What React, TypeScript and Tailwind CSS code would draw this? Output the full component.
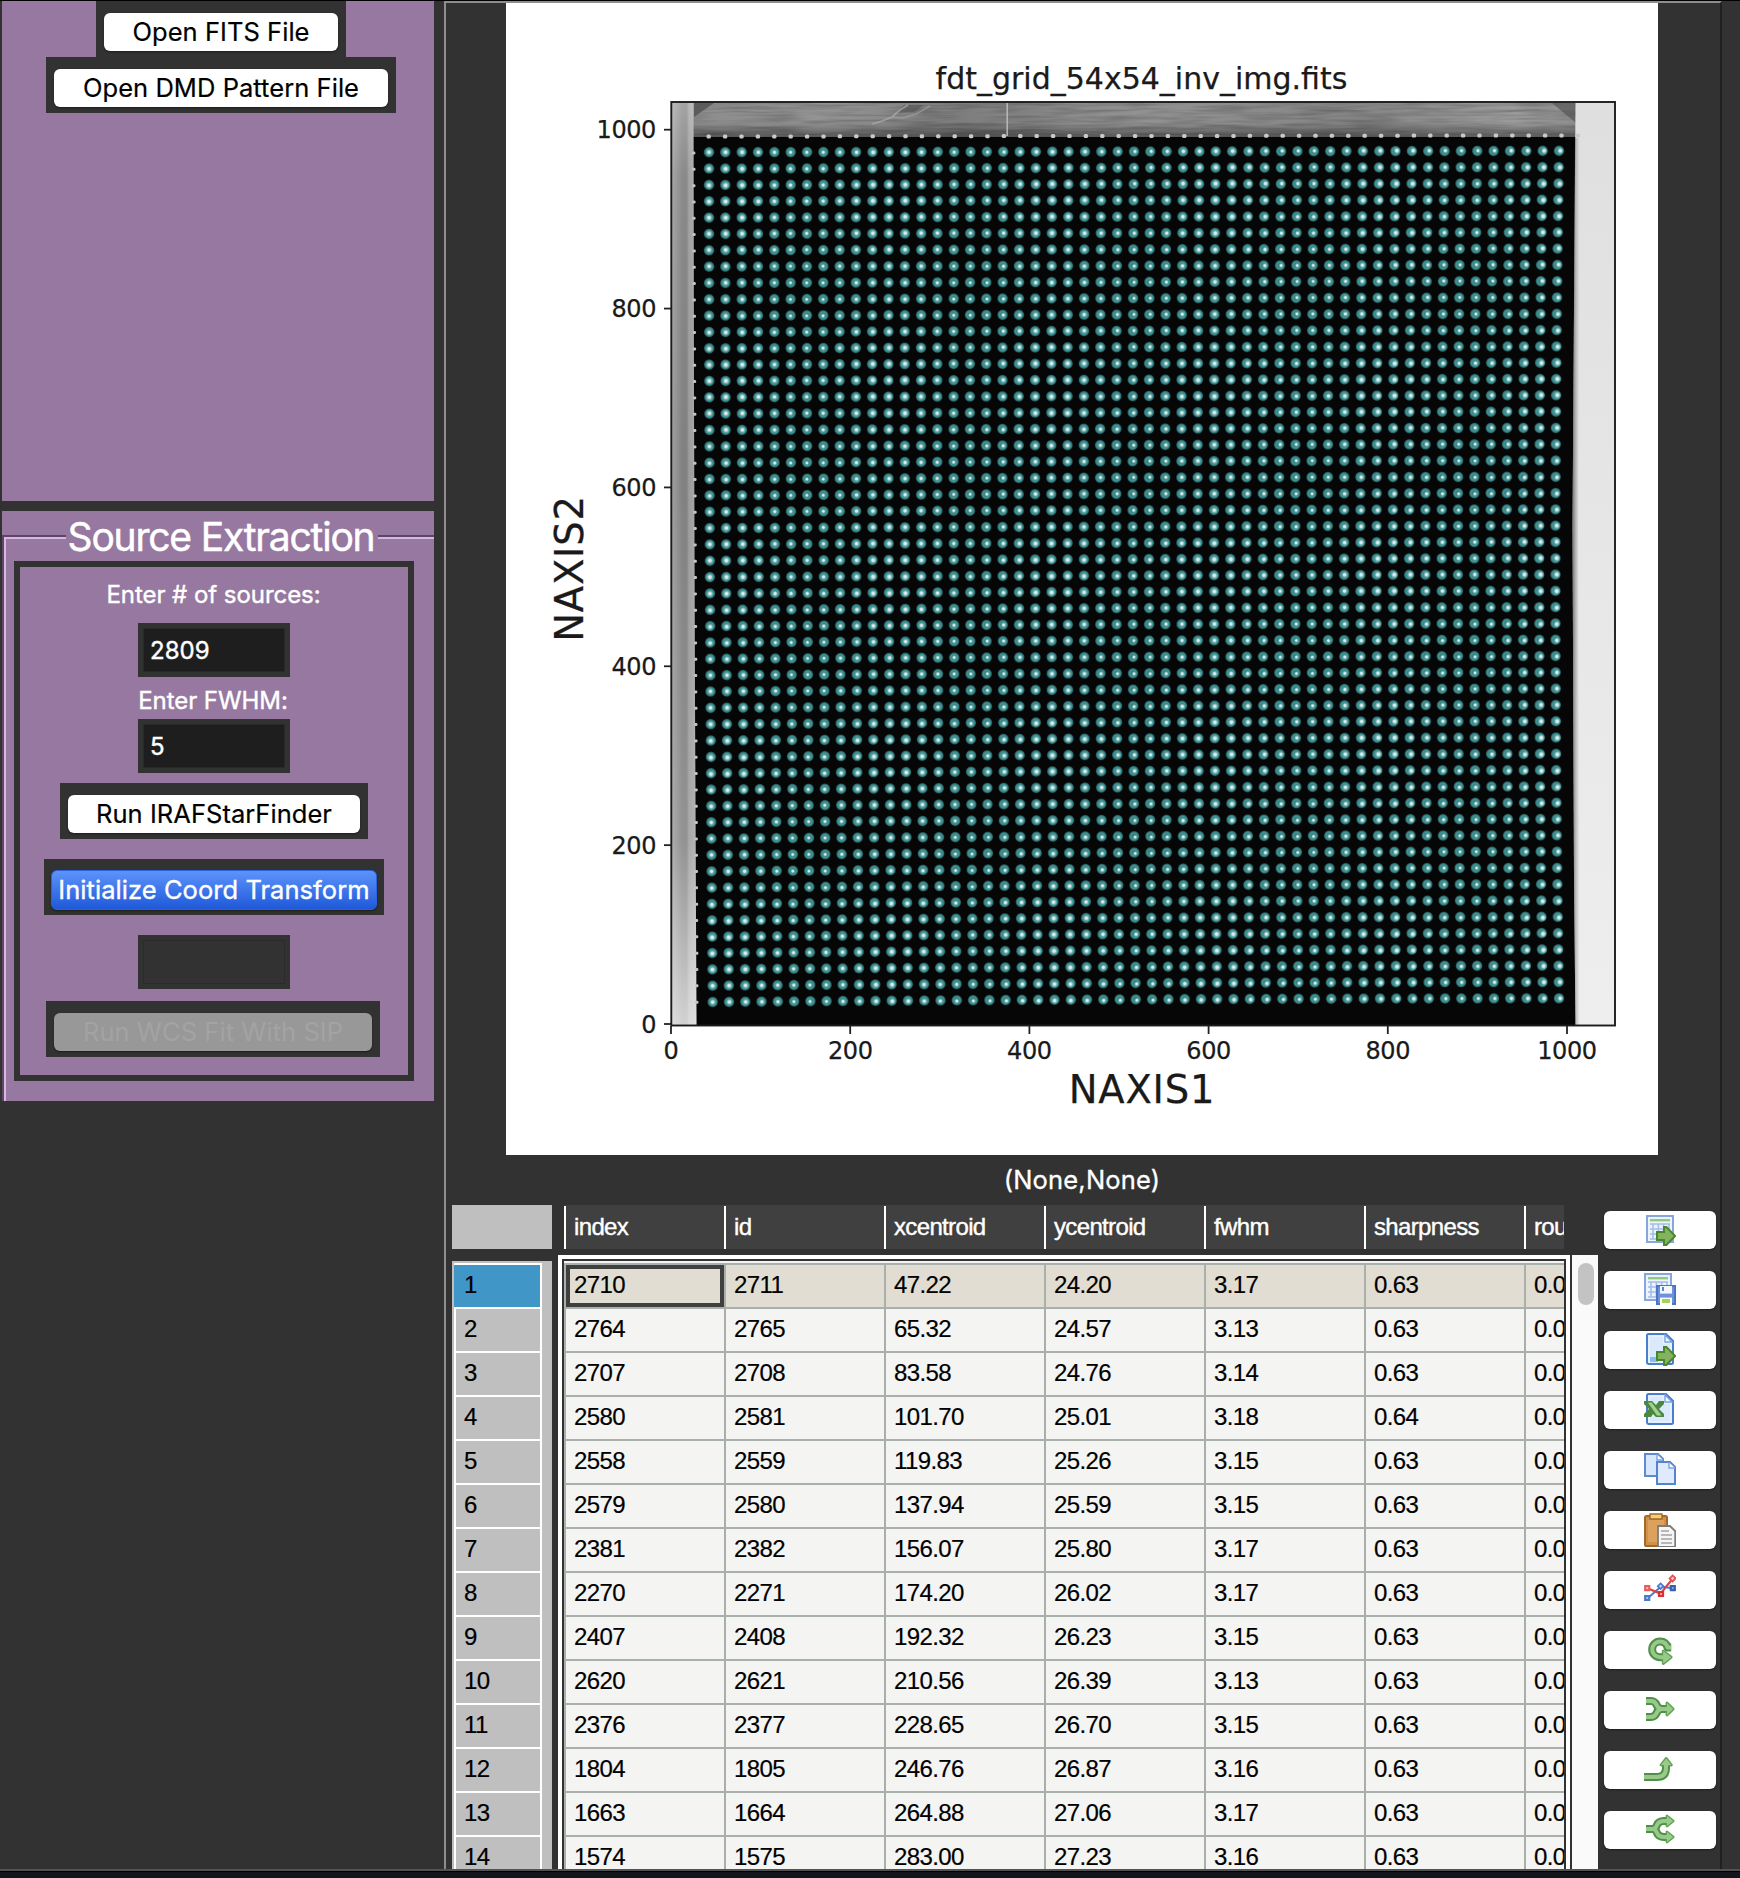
import React from "react";

const COLUMNS = ["index", "id", "xcentroid", "ycentroid", "fwhm", "sharpness", "rou"];

const ROWS: string[][] = [
  ["2710", "2711", "47.22", "24.20", "3.17", "0.63", "0.0"],
  ["2764", "2765", "65.32", "24.57", "3.13", "0.63", "0.0"],
  ["2707", "2708", "83.58", "24.76", "3.14", "0.63", "0.0"],
  ["2580", "2581", "101.70", "25.01", "3.18", "0.64", "0.0"],
  ["2558", "2559", "119.83", "25.26", "3.15", "0.63", "0.0"],
  ["2579", "2580", "137.94", "25.59", "3.15", "0.63", "0.0"],
  ["2381", "2382", "156.07", "25.80", "3.17", "0.63", "0.0"],
  ["2270", "2271", "174.20", "26.02", "3.17", "0.63", "0.0"],
  ["2407", "2408", "192.32", "26.23", "3.15", "0.63", "0.0"],
  ["2620", "2621", "210.56", "26.39", "3.13", "0.63", "0.0"],
  ["2376", "2377", "228.65", "26.70", "3.15", "0.63", "0.0"],
  ["1804", "1805", "246.76", "26.87", "3.16", "0.63", "0.0"],
  ["1663", "1664", "264.88", "27.06", "3.17", "0.63", "0.0"],
  ["1574", "1575", "283.00", "27.23", "3.16", "0.63", "0.0"],
];

/* ---------- left side controls ---------- */

type ButtonKind = "normal" | "primary" | "disabled";

function TkButton({ label, kind = "normal", className = "" }: { label: string; kind?: ButtonKind; className?: string }) {
  const face =
    kind === "primary"
      ? "mx-[7px] mt-[11px] mb-[5px] rounded-[6px] border border-[#2a63dc] bg-gradient-to-b from-[#5c93fb] to-[#1f58d8] text-white [-webkit-text-stroke:0.35px_white]"
      : kind === "disabled"
        ? "mx-2 mt-3 mb-1.5 rounded-[6px] bg-[#989898] text-[#a3a3a3]"
        : "mx-2 mt-3 mb-1.5 rounded-[6px] bg-white text-black [-webkit-text-stroke:0.2px_black]";
  return (
    <div className={`flex h-14 shrink-0 bg-[#323232] ${className}`}>
      <button
        className={`flex flex-1 items-center justify-center text-[25.5px] leading-none tracking-[0.05px] whitespace-nowrap shadow-[0_1px_2px_rgba(0,0,0,0.45)] ${face}`}
      >
        {label}
      </button>
    </div>
  );
}

function Entry({ value, disabled = false, className = "" }: { value: string; disabled?: boolean; className?: string }) {
  return (
    <div className={`h-[54px] w-[152px] shrink-0 bg-[#323232] p-[5px] ${className}`}>
      <div
        className={`flex h-full items-center border pt-[2px] pl-[6px] text-2xl leading-none text-white [-webkit-text-stroke:0.4px_white] ${
          disabled ? "border-[#2b2b2b] bg-[#323232]" : "border-[#292929] bg-[#1e1e1e]"
        }`}
      >
        {value}
      </div>
    </div>
  );
}

function Label({ children, className = "" }: { children: React.ReactNode; className?: string }) {
  return (
    <div
      className={`flex h-[34px] items-center text-2xl leading-none tracking-[-0.05px] text-white [-webkit-text-stroke:0.4px_white] ${className}`}
    >
      {children}
    </div>
  );
}

function Sidebar() {
  return (
    <aside className="flex w-[444px] shrink-0 flex-col pr-[10px] pl-[2px]">
      <section className="flex h-[500px] flex-col items-center bg-[#9678a0]">
        <TkButton label="Open FITS File" className="mr-[-6px] w-[250px]" />
        <TkButton label="Open DMD Pattern File" className="mr-[-6px] w-[350px]" />
      </section>
      <section className="relative mt-[10px] h-[590px] bg-[#9678a0] pt-6">
        <div className="h-full border-t-2 border-l-2 border-[#5c4863]">
          <div className="h-full border-t-2 border-l-2 border-[#d9b6e6] pt-[22px] pl-2">
            <div className="flex h-[520px] w-[400px] flex-col items-center border-[6px] border-[#323232]">
              <Label className="mt-[11px] mr-px">Enter # of sources:</Label>
              <Entry value="2809" className="mt-[11px]" />
              <Label className="mt-[6px] mr-[2px] pt-[2px]">Enter FWHM:</Label>
              <Entry value="5" className="mt-[2px]" />
              <TkButton label="Run IRAFStarFinder" className="mt-[10px] w-[308px]" />
              <TkButton label="Initialize Coord Transform" kind="primary" className="mt-5 w-[340px]" />
              <Entry value="" disabled className="mt-5" />
              <TkButton label="Run WCS Fit With SIP" kind="disabled" className="mt-3 mr-[2px] w-[334px]" />
            </div>
          </div>
        </div>
        <h2 className="absolute top-[1px] left-[64px] flex h-[48px] w-[312px] items-center justify-center bg-[#9678a0] pr-[2px] text-[39px] leading-none tracking-[-1.2px] whitespace-nowrap text-white [-webkit-text-stroke:0.5px_white]">
          Source Extraction
        </h2>
      </section>
    </aside>
  );
}

/* ---------- plot ---------- */

const N = 53;

/** Centre of the detected source in column i, row j (row 0 is the top one). */
function sourceAt(i: number, j: number): [number, number] {
  const u = i / (N - 1);
  const v = j / (N - 1);
  const left = 709 + 3.7 * v * v;
  const right = 1559 - 14 * v * (1 - v);
  const top = 152.2 - 1.4 * u;
  const bottom = 1002 - 3.7 * u - 3.2 * u * (1 - u);
  return [left + (right - left) * u, top + (bottom - top) * v];
}

const X_TICKS = [0, 200, 400, 600, 800, 1000];
const Y_TICKS = [0, 200, 400, 600, 800, 1000];
const xPos = (v: number) => 671 + v * 0.896;
const yPos = (v: number) => 1024 - v * 0.8943;

function FitsPlot() {
  const rings: React.ReactNode[] = [];
  const stars: React.ReactNode[] = [];
  for (let j = 0; j < N; j++) {
    for (let i = 0; i < N; i++) {
      const [x, y] = sourceAt(i, j);
      const key = j * N + i;
      const dx = 1.1 * (i / N) + 0.4 * Math.sin(i * 0.78);
      const dy = 0.5 * (j / N) + 0.4 * Math.sin(j * 0.7 + i * 0.12);
      const r = 3.2 + 0.45 * Math.sin(i * 0.62 + 1) + 0.3 * Math.sin(j * 0.55);
      rings.push(<circle key={key} cx={x.toFixed(1)} cy={y.toFixed(1)} r="6" fill="url(#ring)" />);
      stars.push(
        <circle key={key} cx={(x + dx).toFixed(1)} cy={(y + dy).toFixed(1)} r={r.toFixed(1)} fill="url(#star)" />,
      );
    }
  }
  return (
    <svg width="1152" height="1152" viewBox="506 3 1152 1152" className="block bg-white" fontFamily='"DejaVu Sans", sans-serif'>
      <defs>
        <radialGradient id="ring">
          <stop offset="0" stopColor="#265c5d" />
          <stop offset="0.3" stopColor="#357f80" />
          <stop offset="0.56" stopColor="#439696" />
          <stop offset="0.78" stopColor="#2d6f70" stopOpacity="0.9" />
          <stop offset="1" stopColor="#0b2020" stopOpacity="0" />
        </radialGradient>
        <radialGradient id="star">
          <stop offset="0" stopColor="#e8f3f2" />
          <stop offset="0.35" stopColor="#cfe6e4" />
          <stop offset="1" stopColor="#6dbbbb" stopOpacity="0" />
        </radialGradient>
        <linearGradient id="leftBand" x1="0" x2="0" y1="0" y2="1">
          <stop offset="0" stopColor="#a0a0a0" />
          <stop offset="0.08" stopColor="#848484" />
          <stop offset="0.4" stopColor="#7a7a7a" />
          <stop offset="0.8" stopColor="#8d8d8d" />
          <stop offset="1" stopColor="#d0d0d0" />
        </linearGradient>
        <linearGradient id="leftSheen" x1="0" x2="1" y1="0" y2="0">
          <stop offset="0" stopColor="#fff" stopOpacity="0.3" />
          <stop offset="0.45" stopColor="#fff" stopOpacity="0.05" />
          <stop offset="0.62" stopColor="#fff" stopOpacity="0.05" />
          <stop offset="0.7" stopColor="#fff" stopOpacity="0.25" />
          <stop offset="1" stopColor="#fff" stopOpacity="0.35" />
        </linearGradient>
        <linearGradient id="topBand" x1="0" x2="1" y1="0" y2="0">
          <stop offset="0" stopColor="#8c8c8c" />
          <stop offset="0.15" stopColor="#949494" />
          <stop offset="0.3" stopColor="#7d7d7d" />
          <stop offset="0.5" stopColor="#929292" />
          <stop offset="0.75" stopColor="#858585" />
          <stop offset="0.93" stopColor="#9b9b9b" />
          <stop offset="1" stopColor="#8d8d8d" />
        </linearGradient>
        <linearGradient id="topFade" x1="0" x2="0" y1="0" y2="1">
          <stop offset="0.6" stopColor="#000" stopOpacity="0" />
          <stop offset="1" stopColor="#000" stopOpacity="0.4" />
        </linearGradient>
        <linearGradient id="rightBand" x1="0" x2="0" y1="0" y2="1">
          <stop offset="0" stopColor="#dfdfdf" />
          <stop offset="1" stopColor="#eeeeee" />
        </linearGradient>
        <linearGradient id="rightEdge" x1="0" x2="1" y1="0" y2="0">
          <stop offset="0" stopColor="#555" stopOpacity="0.8" />
          <stop offset="1" stopColor="#aaa" stopOpacity="0" />
        </linearGradient>
        <filter id="grain" x="0" y="0" width="1" height="1">
          <feTurbulence type="fractalNoise" baseFrequency="0.02 0.3" numOctaves="2" seed="4" />
          <feColorMatrix values="0 0 0 0 0  0 0 0 0 0  0 0 0 0 0  1.1 0 0 0 -0.4" />
        </filter>
        <clipPath id="axesClip">
          <rect x="671" y="102" width="944" height="923" />
        </clipPath>
      </defs>

      <g clipPath="url(#axesClip)">
        <rect x="671" y="102" width="944" height="923" fill="#060606" />
        <rect x="692" y="102" width="885" height="35" fill="url(#topBand)" />
        <rect x="692" y="102" width="885" height="33" filter="url(#grain)" opacity="0.38" />
        <path d="M694 103h20l-20 14z" fill="#4a4a4a" opacity="0.7" />
        <path d="M1552 103h24v20z" fill="#4f4f4f" opacity="0.6" />
        <path d="M896 113l8-8h20l-10 7z" fill="#4c4c4c" opacity="0.5" />
        <path d="M872 124l10-3 10-4 8-7 8-5" fill="none" stroke="#b0b0b0" strokeWidth="1.8" opacity="0.65" />
        <path d="M893 117l10 1 13-4 14-8" fill="none" stroke="#a4a4a4" strokeWidth="1.5" opacity="0.6" />
        <rect x="692" y="102" width="885" height="35" fill="url(#topFade)" />
        <rect x="1006.5" y="103" width="1.4" height="33" fill="#bdbdbd" />
        <path d="M671 102h22.5l.5 300 1 300 1.5 324H671z" fill="url(#leftBand)" />
        <path d="M671 102h22.5l.5 300 1 300 1.5 324H671z" fill="url(#leftSheen)" />
        <path d="M1575.5 102H1616v924h-40.5l-1.5-150-1.5-350z" fill="url(#rightBand)" />
        <path d="M1575 138h5l-2 390 2 498h-4.500l-1.500-150-1.500-350z" fill="url(#rightEdge)" />
        {Array.from({ length: N + 1 }, (_, i) => (
          <rect key={i} x={(706.5 + i * 16.4).toFixed(1)} y={(134.5 - i * 0.02).toFixed(1)} width="4.4" height="4" rx="1.5" fill="#c9c9c9" />
        ))}
        {Array.from({ length: N }, (_, j) => (
          <rect
            key={j}
            x={(692 + (j * 3.2) / N).toFixed(1)}
            y={(151.5 + j * 16.33).toFixed(1)}
            width="3.4"
            height="3"
            rx="1.3"
            fill="#c4c4c4"
          />
        ))}
        {rings}
        {stars}
      </g>

      <rect x="671.3" y="102" width="943.7" height="923.5" fill="none" stroke="#1c1c1c" strokeWidth="1.9" />
      <g stroke="#222" strokeWidth="1.8">
        {X_TICKS.map((t) => (
          <line key={t} x1={xPos(t)} x2={xPos(t)} y1="1026" y2="1034" />
        ))}
        {Y_TICKS.map((t) => (
          <line key={t} x1="664" x2="671" y1={yPos(t)} y2={yPos(t)} />
        ))}
      </g>
      <g fontSize="24" fill="#1a1a1a" stroke="#1a1a1a" strokeWidth="0.25" letterSpacing="-0.4">
        {X_TICKS.map((t) => (
          <text key={t} x={xPos(t)} y="1058.5" textAnchor="middle">
            {t}
          </text>
        ))}
        {Y_TICKS.map((t) => (
          <text key={t} x="656" y={yPos(t) + 8.7} textAnchor="end">
            {t}
          </text>
        ))}
      </g>
      <g fill="#1a1a1a" stroke="#1a1a1a" strokeWidth="0.25" textAnchor="middle">
        <text x="1141.5" y="88.7" fontSize="30">
          fdt_grid_54x54_inv_img.fits
        </text>
        <text x="1142" y="1103" fontSize="38.5" letterSpacing="0.8">
          NAXIS1
        </text>
        <text transform="translate(583 568.5) rotate(-90)" fontSize="38.5" letterSpacing="0.8">
          NAXIS2
        </text>
      </g>
    </svg>
  );
}

/* ---------- toolbar icons, drawn on a 16 x 16 grid ---------- */

const Sheet = ({ x = 1, y = 1 }: { x?: number; y?: number }) => (
  <g transform={`translate(${x} ${y})`}>
    <path d="M.5.5h13v13H.5z" fill="#eef4fd" stroke="#86a6dc" />
    <path d="M2 2h10v1.2H2z" fill="#8fca80" />
    <path d="M2 4.5h10M2 7h10M2 9.5h10M2 12h10M3.500 4.500V12M6.200 4.500V12M8.800 4.500V12M11.500 4.500V12" stroke="#a3bde9" strokeWidth=".8" />
  </g>
);

const Page = () => (
  <g>
    <path d="M1.500 1.200q0-.7.7-.7H11l3.500 3.500v11q0 .5-.7.5H2.200q-.7 0-.7-.700z" fill="#cfe2fb" stroke="#4a7ecb" />
    <path d="M2.500 1.500h7.500v3.500h3.500v9.500h-11z" fill="#dbe9fc" stroke="#f4f9ff" strokeWidth=".6" />
    <path d="M10.500 1v3.500H14z" fill="#f6fbff" stroke="#7ba4e0" strokeWidth=".7" />
  </g>
);

const ExportArrow = () => (
  <path d="M6.500 9.500H10V7h1.200l1.300 1.300L15.600 11.500l-3.100 3.100L11.200 16H10v-2.500H6.500z" fill="#84b35f" stroke="#4a862b" strokeWidth="1" />
);

const Floppy = () => (
  <g>
    <path d="M6.500 6.500h9v9h-9z" fill="#6d92d8" stroke="#4a74c4" />
    <path d="M8 6.500h6v3.800H8z" fill="#f3f7fe" />
    <path d="M9 7h1v2H9z" fill="#5b84cf" />
    <path d="M8 12.300h6V16H8z" fill="#fff" />
    <path d="M9 13h4v2H9z" fill="#a5d455" />
  </g>
);

function GreenStroke({ d, head }: { d: string; head: string }) {
  return (
    <g strokeLinejoin="round">
      <path d={d} fill="none" stroke="#4f8f47" strokeWidth="4" />
      <path d={head} fill="#63a955" stroke="#5fa352" strokeWidth="1.4" />
      <path d={d} fill="none" stroke="#98c98b" strokeWidth="2" />
      <path d={head} fill="#98cb8b" />
    </g>
  );
}

const ICONS: { name: string; art: React.ReactNode }[] = [
  {
    name: "Export table",
    art: (
      <>
        <Sheet />
        <ExportArrow />
      </>
    ),
  },
  {
    name: "Save table",
    art: (
      <>
        <Sheet x={0} y={0} />
        <Floppy />
      </>
    ),
  },
  {
    name: "Export file",
    art: (
      <>
        <Page />
        <path d="M3 12h4v2.500H3z" fill="#7dc0fb" />
        <ExportArrow />
      </>
    ),
  },
  {
    name: "Open spreadsheet",
    art: (
      <>
        <Page />
        <path d="M0 4h4l2 2 1.500-2H10v1.500L7.500 8 10 10.500V12H6L4.500 10.500 3.500 12H0v-1.500L2.500 8 0 5.500z" fill="#4a8840" />
        <path d="M2 4.700h1.800L8.800 11.300H6.500z" fill="#a4cf93" />
      </>
    ),
  },
  {
    name: "Copy",
    art: (
      <>
        <path d="M.5.5H7L9.500 3v8.500h-9z" fill="#d8e7fc" stroke="#5f8ad0" />
        <path d="M6.500.7V3.500h3" fill="#fff" stroke="#7ba4e0" strokeWidth=".7" />
        <path d="M6.500 4.500H13L15.500 7v8.500h-9z" fill="#dfebfd" stroke="#5583cd" />
        <path d="M12.500 4.700V7.500h3" fill="#fff" stroke="#7ba4e0" strokeWidth=".7" />
      </>
    ),
  },
  {
    name: "Paste",
    art: (
      <>
        <rect x=".5" y="1.500" width="11" height="15" rx=".8" fill="#d0914a" stroke="#a4692a" />
        <path d="M2 3.500h8v11H2z" fill="#dca15c" />
        <path d="M3 .5h6V3H3z" fill="#f3cf75" stroke="#a4692a" strokeWidth=".7" />
        <path d="M7 6.500h6L15.600 9v8H7z" fill="#f5f5f5" stroke="#7c7c7c" strokeWidth=".9" />
        <path d="M8.500 9h4M8.500 11h5.500M8.500 13h5.500M8.500 15h5.500" stroke="#a2a2a2" strokeWidth=".8" />
      </>
    ),
  },
  {
    name: "Plot",
    art: (
      <>
        <path d="M2 12.500 8.500 6.800 14 7.600" fill="none" stroke="#4c7bd0" strokeWidth="1" />
        <path d="M2 7.800l6.300 2.500L14.300 2.800" fill="none" stroke="#e04040" strokeWidth="1.1" />
        <path d="M.6 6.600h2v2H.6z" fill="#ffc9c9" stroke="#ea5c5c" strokeWidth="1.100" />
        <path d="M7.500 9.500h2v2H7.500z" fill="#ffb0b0" stroke="#dc2f2f" strokeWidth="1.100" />
        <path d="M14.300 1.200l1.500 1.500-1.500 1.500-1.500-1.500z" fill="#ffd0d0" stroke="#e35050" strokeWidth=".9" />
        <path d="M.6 11.500h2v2H.6z" fill="#a8c4f0" stroke="#4c78c8" strokeWidth="1.100" />
        <path d="M8.300 5.200l1.400 1.400-1.400 1.400-1.400-1.400z" fill="#d0e0fa" stroke="#4c7bd0" strokeWidth=".9" />
        <path d="M13.400 6.600h2v2h-2z" fill="#8fb2ea" stroke="#3462b4" strokeWidth="1.100" />
      </>
    ),
  },
  {
    name: "Rotate",
    art: <GreenStroke d="M13.600 7.300H11.800Q11 4.300 8 4.300A3.900 3.900 0 0 0 8 12.100H9.800" head="M9.600 9v6.300l4-3.200z" />,
  },
  {
    name: "Merge",
    art: <GreenStroke d="M1 4h2.500q2 0 2.800 2T9 8h2.500M1 12h2.500q2 0 2.800-2T9 8" head="M11.500 5v6L14.600 8z" />,
  },
  {
    name: "Move up",
    art: <GreenStroke d="M0 12h6.500q4.500 0 4.500-4.500V6" head="M8.500 6h5.200L11.100 2.700z" />,
  },
  {
    name: "Split",
    art: <GreenStroke d="M1 8h3.500q1.200 0 2-2T10 4h1.500M4.500 8q1.200 0 2 2t3.500 2h1.500" head="M11.500 1.500v5L14.600 4zM11.500 9.500v5L14.600 12z" />,
  },
];

function Toolbar() {
  return (
    <div className="ml-[6px] flex w-[112px] flex-col gap-[22px] pt-[6px]">
      {ICONS.map((icon) => (
        <button
          key={icon.name}
          aria-label={icon.name}
          className="flex h-[38px] shrink-0 justify-center rounded-[6px] bg-white pt-[2px] shadow-[0_1px_2px_rgba(0,0,0,0.45)]"
        >
          <svg width="32" height="34" viewBox="0 0 16 17">
            {icon.art}
          </svg>
        </button>
      ))}
    </div>
  );
}

/* ---------- table ---------- */

function SourceTable() {
  return (
    <div className="flex h-[664px] overflow-hidden pl-[6px] font-['Liberation_Sans',Arial,sans-serif] text-2xl leading-none tracking-[-0.62px]">
      <div className="flex w-[100px] flex-col">
        <div className="h-11 shrink-0 bg-[#bfbfbf]" />
        <div className="mt-3 flex-1 overflow-hidden bg-[#bfbfbf] pt-[2px] pl-[2px]">
          <div className="w-[88px] border-t-2 border-white">
            {ROWS.map((_, r) => (
              <div
                key={r}
                className={`flex h-11 items-center border-r-2 border-b-2 border-white pb-[3px] text-black [-webkit-text-stroke:0.2px_black] ${
                  r === 0 ? "bg-[#4196c8] pl-[10px]" : "border-l-2 bg-[#bfbfbf] pl-2"
                }`}
              >
                {r + 1}
              </div>
            ))}
          </div>
        </div>
      </div>

      <div className="ml-[6px] flex w-[1012px] flex-col">
        <div className="mb-[6px] ml-[6px] flex h-11 w-[1000px] shrink-0 overflow-hidden bg-[#404040] pt-px">
          {COLUMNS.map((c) => (
            <div
              key={c}
              className="flex w-40 shrink-0 items-center border-l-2 border-white pb-px pl-[8px] tracking-[-0.65px] text-white [-webkit-text-stroke:0.4px_white]"
            >
              {c}
            </div>
          ))}
        </div>
        <div className="flex-1 overflow-hidden bg-white px-1 pt-1">
          <div className="h-full overflow-hidden border-x-2 border-t-2 border-[#323232] bg-[#f4f4f3] pt-[2px]">
            <div className="border-t-2 border-[#a9b0ac]">
              {ROWS.map((row, r) => (
                <div key={r} className={`flex h-11 border-b-2 border-[#a9b0ac] ${r === 0 ? "bg-[#e2ddd3]" : "bg-[#f4f4f3]"}`}>
                  {row.map((v, c) => (
                    <div key={c} className="flex w-40 shrink-0 border-l-2 border-[#a9b0ac]">
                      <div
                        className={`flex flex-1 items-center text-black [-webkit-text-stroke:0.2px_black] ${
                          r === 0 && c === 0 ? "border-4 border-[#3f3f3f] pb-[3px] pl-1" : "pb-[3px] pl-2"
                        }`}
                      >
                        {v}
                      </div>
                    </div>
                  ))}
                </div>
              ))}
            </div>
          </div>
        </div>
      </div>

      <div className="mt-[50px] ml-[2px] w-[26px] bg-[#fafafa] pt-2 pl-[6px]">
        <div className="h-[42px] w-4 rounded-full bg-[#c3c3c3]" />
      </div>

      <Toolbar />
    </div>
  );
}

export default function App() {
  return (
    <div className="flex h-[1878px] w-[1740px] flex-col overflow-hidden bg-[#323232] font-['Inter',sans-serif]">
      <div className="h-px shrink-0 bg-black" />
      <div className="flex h-[1868px] shrink-0">
        <Sidebar />
        <main className="flex w-[1278px] flex-col border-t-2 border-r-2 border-l-2 border-t-[#8e8e8e] border-r-[#202020] border-l-[#8e8e8e]">
          <div className="pl-[60px]">
            <FitsPlot />
          </div>
          <div className="flex h-[50px] w-[1272px] shrink-0 items-center justify-center text-[25.5px] leading-none tracking-[0.2px] text-white [-webkit-text-stroke:0.3px_white]">
            (None,None)
          </div>
          <SourceTable />
        </main>
      </div>
      <div className="h-[2px] shrink-0 bg-[#525252]" />
      <div className="flex-1 border-t border-black bg-[#12161a]" />
    </div>
  );
}
